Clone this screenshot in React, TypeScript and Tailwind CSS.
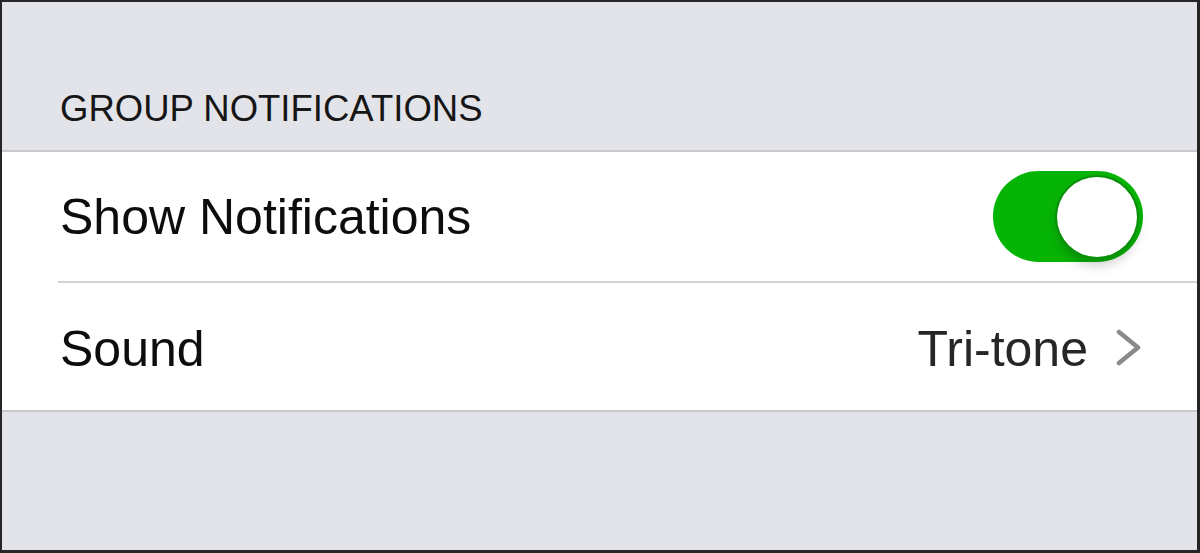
import * as React from "react";

// iOS-style group notification settings panel
const font = { fontFamily: '"Liberation Sans", Arial, sans-serif' };

function Toggle() {
  return (
    <div className="flex h-[91px] w-[150px] items-center justify-end rounded-full bg-[#06b406] pr-[6px]">
      <div className="h-[80px] w-[80px] rounded-full bg-white shadow-[0_0_0_2px_#0a8f0a,0_8px_12px_rgba(0,0,0,0.22)]" />
    </div>
  );
}

function Chevron() {
  return (
    <svg width="26" height="37" viewBox="0 0 26 37" aria-hidden>
      <polyline
        points="3,3 22,18.5 3,34"
        fill="none"
        stroke="#8a8a8a"
        strokeWidth="4.5"
        strokeLinecap="round"
        strokeLinejoin="round"
      />
    </svg>
  );
}

export default function App() {
  return (
    <div
      className="box-border flex h-[553px] w-[1200px] flex-col border-b-[3px] border-l-2 border-r-[3px] border-t-2 border-[#262626] bg-[#e3e4e9]"
      style={font}
    >
      {/* Section header */}
      <div className="h-[148px] pl-[58px] pt-[89px]">
        <p className="text-[36.5px] leading-none text-[#161616]">GROUP NOTIFICATIONS</p>
      </div>

      {/* White grouped list */}
      <div className="border-b-2 border-t-2 border-[#c9c9ce] bg-white">
        <div className="flex h-[129px] items-center justify-between pl-[58px] pr-[54px]">
          <span className="text-[50px] leading-none text-[#0d0d0d]">Show Notifications</span>
          <Toggle />
        </div>
        <div className="ml-[56px] h-[2px] bg-[#d3d3d6]" />
        <div className="flex h-[127px] items-center justify-between pl-[58px] pr-[55px] pt-[5px]">
          <span className="text-[50px] leading-none text-[#0d0d0d]">Sound</span>
          <div className="flex items-center gap-[28px]">
            <span className="text-[50px] leading-none text-[#262626]">Tri-tone</span>
            <div className="-mt-[4px]">
              <Chevron />
            </div>
          </div>
        </div>
      </div>

      <div className="flex-1" />
    </div>
  );
}
